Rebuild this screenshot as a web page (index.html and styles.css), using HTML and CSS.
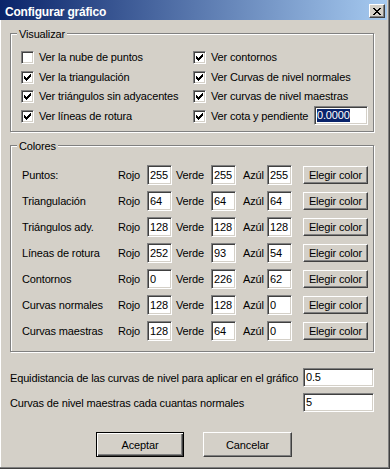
FILE: index.html
```html
<!DOCTYPE html>
<html lang="es">
<head>
<meta charset="utf-8">
<title>Configurar gráfico</title>
<link rel="stylesheet" href="styles.css">
</head>
<body>
<div class="window">
  <div class="titlebar">
    <span class="title">Configurar gráfico</span>
    <span class="close"><svg width="8" height="7" viewBox="0 0 8 7" shape-rendering="crispEdges"><path fill="#000" d="M0 0h2v1H0zM6 0h2v1H6zM1 1h2v1H1zM5 1h2v1H5zM2 2h4v1H2zM3 3h2v1H3zM2 4h4v1H2zM1 5h2v1H1zM5 5h2v1H5zM0 6h2v1H0zM6 6h2v1H6z"/></svg></span>
  </div>
  <div class="content">
    <div class="group">
      <div class="legend">Visualizar</div>
      <div class="checks">
        <div class="check"><span class="cb"></span><span class="ctext">Ver la nube de puntos</span></div>
        <div class="check"><span class="cb"><svg width="7" height="7" viewBox="0 0 7 7" shape-rendering="crispEdges"><path fill="#000" d="M0 2h1v3H0zM1 3h1v3H1zM2 4h1v3H2zM3 3h1v3H3zM4 2h1v3H4zM5 1h1v3H5zM6 0h1v3H6z"/></svg></span><span class="ctext">Ver contornos</span></div>
        <div class="check"><span class="cb"><svg width="7" height="7" viewBox="0 0 7 7" shape-rendering="crispEdges"><path fill="#000" d="M0 2h1v3H0zM1 3h1v3H1zM2 4h1v3H2zM3 3h1v3H3zM4 2h1v3H4zM5 1h1v3H5zM6 0h1v3H6z"/></svg></span><span class="ctext">Ver la triangulación</span></div>
        <div class="check"><span class="cb"><svg width="7" height="7" viewBox="0 0 7 7" shape-rendering="crispEdges"><path fill="#000" d="M0 2h1v3H0zM1 3h1v3H1zM2 4h1v3H2zM3 3h1v3H3zM4 2h1v3H4zM5 1h1v3H5zM6 0h1v3H6z"/></svg></span><span class="ctext">Ver Curvas de nivel normales</span></div>
        <div class="check"><span class="cb"><svg width="7" height="7" viewBox="0 0 7 7" shape-rendering="crispEdges"><path fill="#000" d="M0 2h1v3H0zM1 3h1v3H1zM2 4h1v3H2zM3 3h1v3H3zM4 2h1v3H4zM5 1h1v3H5zM6 0h1v3H6z"/></svg></span><span class="ctext">Ver triángulos sin adyacentes</span></div>
        <div class="check"><span class="cb"><svg width="7" height="7" viewBox="0 0 7 7" shape-rendering="crispEdges"><path fill="#000" d="M0 2h1v3H0zM1 3h1v3H1zM2 4h1v3H2zM3 3h1v3H3zM4 2h1v3H4zM5 1h1v3H5zM6 0h1v3H6z"/></svg></span><span class="ctext">Ver curvas de nivel maestras</span></div>
        <div class="check"><span class="cb"><svg width="7" height="7" viewBox="0 0 7 7" shape-rendering="crispEdges"><path fill="#000" d="M0 2h1v3H0zM1 3h1v3H1zM2 4h1v3H2zM3 3h1v3H3zM4 2h1v3H4zM5 1h1v3H5zM6 0h1v3H6z"/></svg></span><span class="ctext">Ver líneas de rotura</span></div>
        <div class="check"><span class="cb"><svg width="7" height="7" viewBox="0 0 7 7" shape-rendering="crispEdges"><path fill="#000" d="M0 2h1v3H0zM1 3h1v3H1zM2 4h1v3H2zM3 3h1v3H3zM4 2h1v3H4zM5 1h1v3H5zM6 0h1v3H6z"/></svg></span><span class="ctext">Ver cota y pendiente</span><span class="tb cota"><span class="sel">0.0000</span></span></div>
      </div>
    </div>

    <div class="group group-col">
      <div class="legend">Colores</div>
      <div class="colors">
        <span>Puntos:</span><span>Rojo</span><span class="tb">255</span><span class="vl">Verde</span><span class="tb">255</span><span class="al">Azúl</span><span class="tb">255</span><span class="btn btn-sm">Elegir color</span>
        <span>Triangulación</span><span>Rojo</span><span class="tb">64</span><span class="vl">Verde</span><span class="tb">64</span><span class="al">Azúl</span><span class="tb">64</span><span class="btn btn-sm">Elegir color</span>
        <span>Triángulos ady.</span><span>Rojo</span><span class="tb">128</span><span class="vl">Verde</span><span class="tb">128</span><span class="al">Azúl</span><span class="tb">128</span><span class="btn btn-sm">Elegir color</span>
        <span>Líneas de rotura</span><span>Rojo</span><span class="tb">252</span><span class="vl">Verde</span><span class="tb">93</span><span class="al">Azúl</span><span class="tb">54</span><span class="btn btn-sm">Elegir color</span>
        <span>Contornos</span><span>Rojo</span><span class="tb">0</span><span class="vl">Verde</span><span class="tb">226</span><span class="al">Azúl</span><span class="tb">62</span><span class="btn btn-sm">Elegir color</span>
        <span>Curvas normales</span><span>Rojo</span><span class="tb">128</span><span class="vl">Verde</span><span class="tb">128</span><span class="al">Azúl</span><span class="tb">0</span><span class="btn btn-sm">Elegir color</span>
        <span>Curvas maestras</span><span>Rojo</span><span class="tb">128</span><span class="vl">Verde</span><span class="tb">64</span><span class="al">Azúl</span><span class="tb">0</span><span class="btn btn-sm">Elegir color</span>
      </div>
    </div>

    <div class="fields">
      <div class="field"><span>Equidistancia de las curvas de nivel para aplicar en el gráfico</span><span class="tb">0.5</span></div>
      <div class="field"><span>Curvas de nivel maestras cada cuantas normales</span><span class="tb">5</span></div>
    </div>

    <div class="buttons">
      <span class="btn btn-lg default">Aceptar</span>
      <span class="btn btn-lg">Cancelar</span>
    </div>
  </div>
</div>
</body>
</html>
```

FILE: styles.css
```css
html, body {
  margin: 0;
  padding: 0;
  background: #d4d0c8;
}

body {
  font-family: "Liberation Sans", Arial, sans-serif;
  font-size: 11px;
  letter-spacing: -0.15px;
  color: #000;
}

.window {
  width: 390px;
  height: 469px;
  box-sizing: border-box;
  background: #d4d0c8;
  box-shadow: inset -1px -1px 0 #404040, inset -2px -2px 0 #808080, inset 1px 0 0 #ffffff;
  overflow: hidden;
}

.titlebar {
  height: 20px;
  margin-right: 3px;
  background: linear-gradient(to right, #0a246a, #a6caf0);
  display: flex;
  align-items: flex-start;
}

.title {
  color: #fff;
  font-weight: bold;
  font-size: 12px;
  letter-spacing: -0.2px;
  line-height: 14px;
  margin: 5px 0 0 5px;
}

.close {
  margin: 4px 2px 0 auto;
  width: 16px;
  height: 14px;
  box-sizing: border-box;
  border: 1px solid;
  border-color: #fff #404040 #404040 #fff;
  box-shadow: inset -1px -1px 0 #808080;
  background: #d4d0c8;
}

.close svg {
  display: block;
  margin: 3px 0 0 3px;
}

.content {
  padding: 13px 0 0 10px;
  width: 364px;
}

.group {
  border: 1px solid #808080;
  box-shadow: inset 1px 1px 0 #fff, 1px 1px 0 #fff;
}

.group-col {
  margin-top: 13px;
}

.legend {
  width: max-content;
  margin: -6px 0 0 6px;
  padding: 0 2px;
  background: #d4d0c8;
  line-height: 13px;
}

.checks {
  display: grid;
  grid-template-columns: 172px 175px;
  grid-template-rows: 20px 19px 20px 20px;
  margin-top: 7px;
  padding: 0 0 4px 10px;
}

.check {
  display: flex;
  align-items: flex-start;
  padding-top: 3px;
  line-height: 13px;
}

.cb {
  flex: none;
  width: 13px;
  height: 13px;
  box-sizing: border-box;
  border: 1px solid;
  border-color: #808080 #fff #fff #808080;
  box-shadow: inset 1px 1px 0 #404040, inset -1px -1px 0 #d4d0c8;
  background: #fff;
  margin-right: 5px;
}

.cb svg {
  display: block;
  margin: 2px 0 0 2px;
}

.ctext {
  white-space: nowrap;
}

.tb {
  box-sizing: border-box;
  height: 20px;
  border: 1px solid;
  border-color: #808080 #fff #fff #808080;
  box-shadow: inset 1px 1px 0 #404040, inset -1px -1px 0 #d4d0c8;
  background: #fff;
  padding-left: 2px;
  display: flex;
  align-items: center;
  line-height: 13px;
}

.cota {
  width: 54px;
  height: 19px;
  margin: -4px 0 0 auto;
}

.sel {
  background: #0a246a;
  color: #fff;
}

.colors {
  display: grid;
  grid-template-columns: 96px 29px 25px 39px 25px 31px 25px 76px;
  grid-auto-rows: 20px;
  row-gap: 6px;
  align-items: center;
  margin-top: 12px;
  padding: 0 0 10px 11px;
  white-space: nowrap;
}

.vl {
  padding-left: 4px;
}

.al {
  padding-left: 7px;
}

.btn {
  box-sizing: border-box;
  border: 1px solid;
  border-color: #fff #404040 #404040 #fff;
  box-shadow: inset -1px -1px 0 #808080;
  background: #d4d0c8;
  display: flex;
  align-items: center;
  justify-content: center;
  white-space: nowrap;
}

.btn-sm {
  margin-left: 11px;
  width: 65px;
  height: 18px;
}

.fields {
  margin-top: 16px;
  display: flex;
  flex-direction: column;
  gap: 6px;
}

.field {
  display: flex;
  align-items: center;
  justify-content: space-between;
  height: 19px;
  white-space: nowrap;
}

.field .tb {
  width: 71px;
  height: 19px;
}

.buttons {
  margin-top: 20px;
  display: flex;
  gap: 19px;
  padding-left: 86px;
}

.btn-lg {
  width: 88px;
  height: 25px;
}

.btn-lg + .btn-lg {
  width: 89px;
}

.btn.default {
  border: 1px solid #000;
  box-shadow: inset 1px 1px 0 #fff, inset -1px -1px 0 #404040, inset -2px -2px 0 #808080;
}
```
